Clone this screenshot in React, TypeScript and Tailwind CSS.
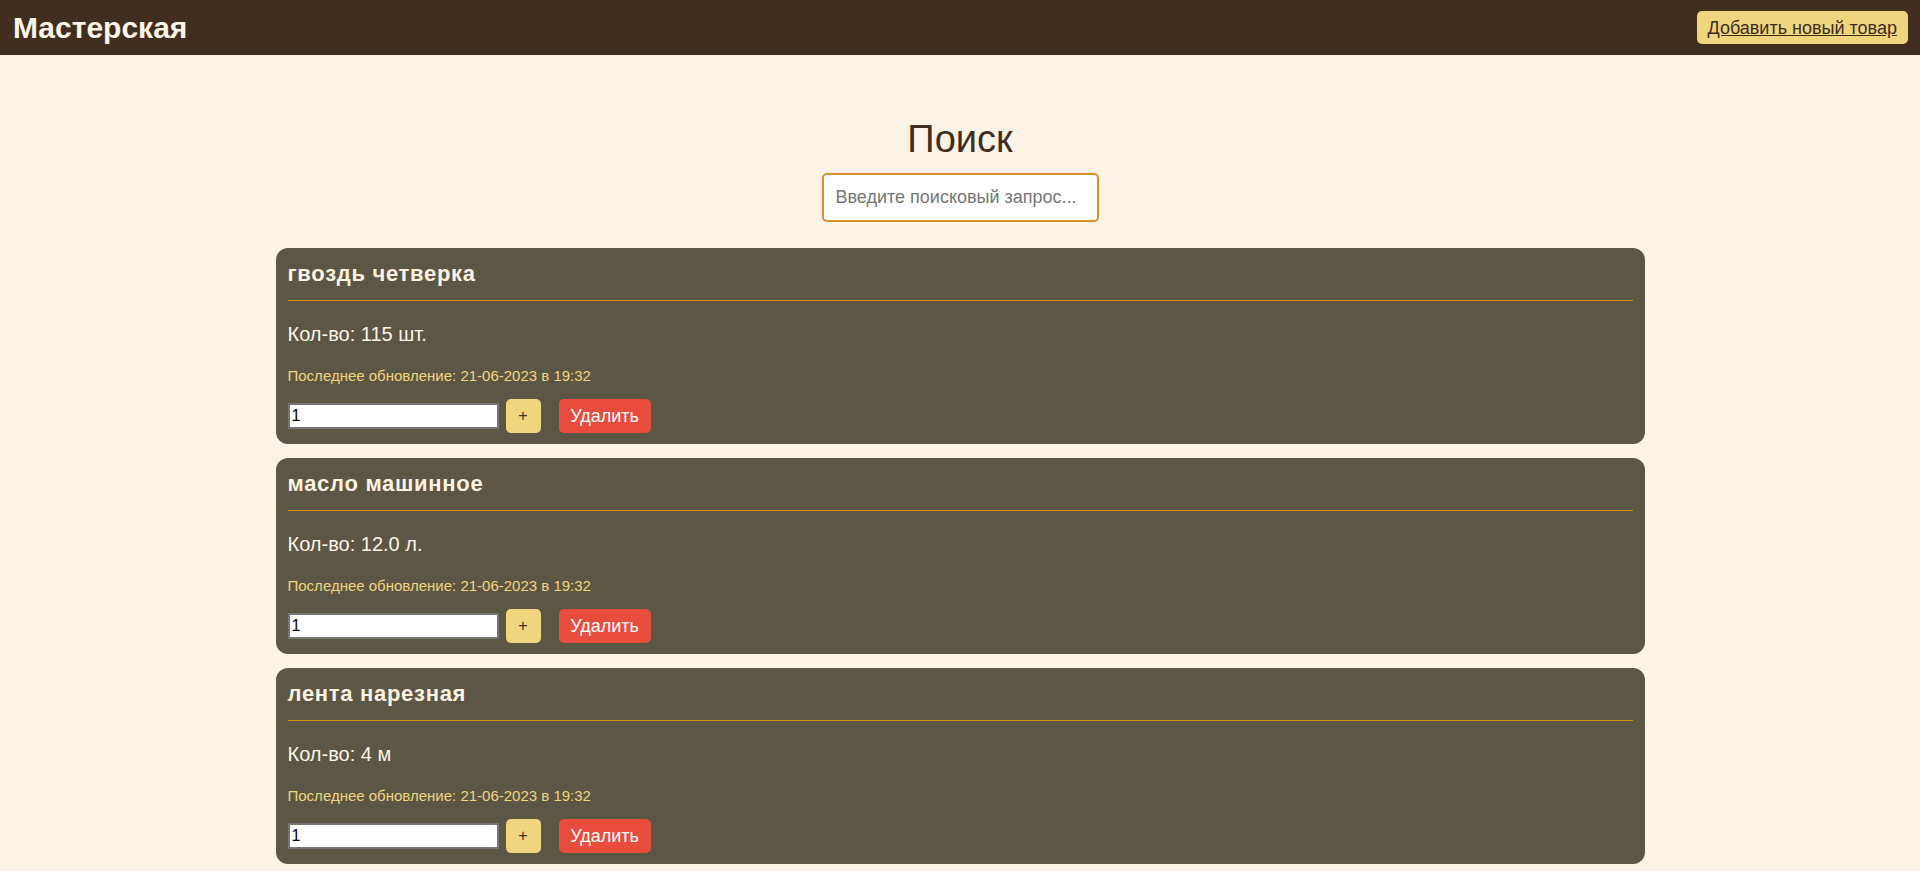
import React from "react";

const items = [
  { name: "гвоздь четверка", qty: "Кол-во: 115 шт." },
  { name: "масло машинное", qty: "Кол-во: 12.0 л." },
  { name: "лента нарезная", qty: "Кол-во: 4 м" },
];

export default function App() {
  return (
    <div
      className="min-h-screen bg-[#fbf3e5]"
      style={{ fontFamily: '"Liberation Sans", Arial, sans-serif' }}
    >
      <header className="h-[55px] bg-[#422e1f] flex items-center justify-between pl-[13px] pr-[12px]">
        <h1 className="text-[30px] leading-[36px] font-bold text-[#fdf5e6]">Мастерская</h1>
        <button className="h-[33px] px-[11px] rounded-[5px] bg-[#f0d57f] text-[18px] leading-[22px] text-[#3f2d20] underline">
          Добавить новый товар
        </button>
      </header>

      <main className="flex flex-col items-center">
        <h2 className="mt-[62px] text-[38px] leading-[45px] text-[#3f2d20]">Поиск</h2>
        <input
          className="mt-[11px] w-[277px] h-[49px] rounded-[5px] border-2 border-[#d4922a] bg-white px-[12px] text-[18px] text-[#333] placeholder:text-[#757575] outline-none"
          placeholder="Введите поисковый запрос..."
        />

        <div className="mt-[26px] flex flex-col gap-[14px] w-[1369px]">
          {items.map((it) => (
            <div key={it.name} className="bg-[#5c5645] rounded-[12px] px-[12px] pt-[13px] pb-[11px]">
              <div className="pb-[13px] border-b border-[#d48c0c]">
                <h3 className="text-[22px] leading-[26px] font-bold tracking-[0.7px] text-[#fdf3e1]">{it.name}</h3>
              </div>
              <p className="mt-[21px] text-[20px] leading-[24px] text-[#fdf5e6]">{it.qty}</p>
              <p className="mt-[21px] text-[15px] leading-[18px] text-[#f0d57f]">
                Последнее обновление: 21-06-2023 в 19:32
              </p>
              <div className="mt-[14px] flex items-center">
                <input
                  defaultValue="1"
                  className="w-[211px] h-[26px] bg-white border-2 border-[#767676] px-[2px] text-[16px] text-black outline-none"
                />
                <button className="ml-[7px] w-[35px] h-[34px] rounded-[5px] bg-[#f0d57f] text-[16px] text-[#3f2d20]">
                  +
                </button>
                <button className="ml-[18px] w-[92px] h-[34px] rounded-[5px] bg-[#e74c3c] text-[18px] text-white">
                  Удалить
                </button>
              </div>
            </div>
          ))}
        </div>
      </main>
    </div>
  );
}
